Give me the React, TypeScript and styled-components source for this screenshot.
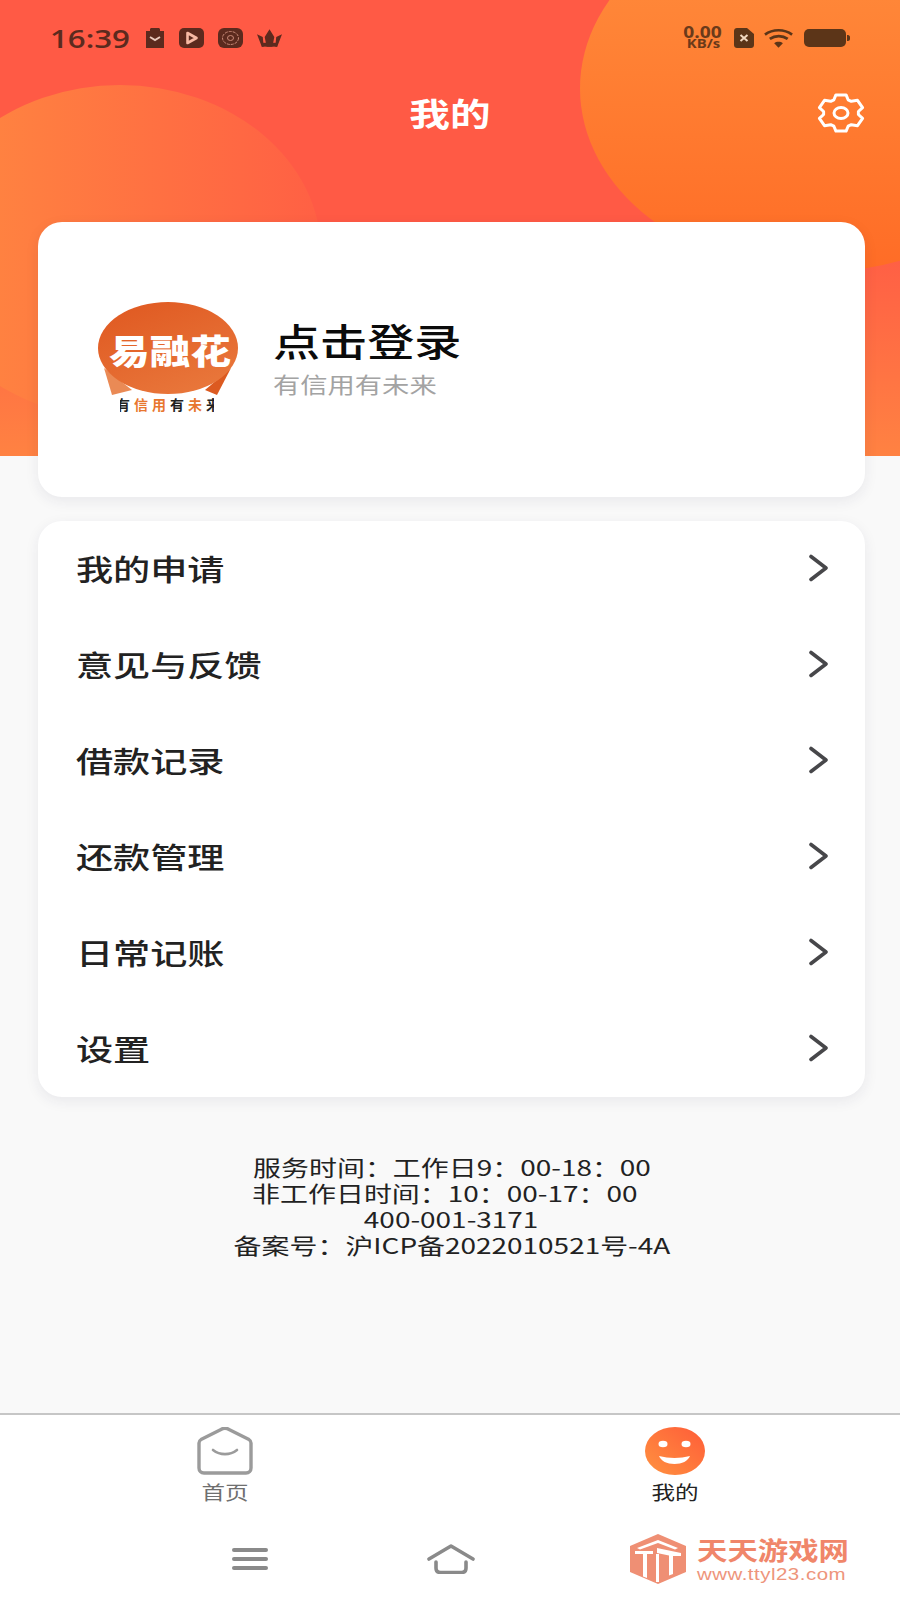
import React from 'react'
import styled, {createGlobalStyle, css} from 'styled-components'

const CJK = `"Noto Sans CJK SC", "Noto Sans", sans-serif`

const GlobalStyle = createGlobalStyle`
  html, body {
    margin: 0;
    padding: 0;
    background: #f9f9f9;
    font-family: ${CJK};
  }
`

// the whole screenshot is stretched sideways, so text gets the same treatment
const stretched = (amount: number, origin = 'center') => css`
  display: inline-block;
  transform: scaleX(${amount});
  transform-origin: ${origin} center;
  white-space: pre;
`

const Page = styled.div`
  width: 900px;
  height: 1600px;
  display: flex;
  flex-direction: column;
  background: #f9f9f9;
  overflow: hidden;
  position: relative;
`

const Hero = styled.header`
  height: 456px;
  flex: none;
  position: relative;
  overflow: hidden;
  background: linear-gradient(180deg, #ff5a45 0%, #ff5a45 50%, #ff8242 100%);
`

const LeftBlob = styled.div`
  position: absolute;
  left: -81px;
  top: 85px;
  width: 402px;
  height: 334px;
  border-radius: 50%;
  background: linear-gradient(90deg, #ff8a40 0%, #ff7042 60%, #ff6044 100%);
`

const RightBlob = styled.div`
  position: absolute;
  left: 580px;
  top: -95px;
  width: 476px;
  height: 367px;
  border-radius: 50%;
  background: linear-gradient(180deg, #ff8f3e 0%, #ff6c26 100%);
`

const StatusBar = styled.div`
  position: relative;
  height: 76px;
  box-sizing: border-box;
  padding: 0 50px 0 50px;
  display: flex;
  align-items: center;
  justify-content: space-between;
  color: #5c2a1e;
`

const StatusGroup = styled.div`
  display: flex;
  align-items: center;
  gap: 14px;
`

const StatusIcons = styled(StatusGroup)`
  gap: 10px;
`

const Clock = styled.span`
  font-family: "Open Sans", sans-serif;
  font-size: 26px;
  font-weight: 600;
  width: 80px;
  margin-right: 1px;
  line-height: 1;

  span {
    ${stretched(1.2, 'left')};
  }
`

const NetSpeed = styled.div`
  width: 42px;
  display: flex;
  flex-direction: column;
  align-items: center;
  color: #6b3a1a;
  font-family: "Open Sans", sans-serif;
  font-weight: 700;
  line-height: 12px;
`

const NetValue = styled.span<{$size: number}>`
  ${stretched(1.24)};
  font-size: ${p => p.$size}px;
`

const TitleRow = styled.div`
  position: relative;
  height: 72px;
  display: flex;
  align-items: center;
  justify-content: center;
`

const Title = styled.h1`
  ${stretched(1.27)};
  margin: 0;
  color: #fff;
  font-size: 32px;
  font-weight: 700;
  line-height: 72px;
`

const GearButton = styled.div`
  position: absolute;
  right: 35px;
  top: 17px;
  width: 48px;
  height: 40px;
  color: #fff;
`

const Content = styled.main`
  position: relative;
  margin-top: -234px;
  padding: 0 35px 0 38px;
  display: flex;
  flex-direction: column;
  gap: 24px;
`

const Card = styled.section`
  background: #fff;
  border-radius: 24px;
  box-shadow: 0 4px 14px rgba(40, 40, 80, 0.08);
`

const ProfileCard = styled(Card)`
  height: 275px;
  box-sizing: border-box;
  padding: 0 0 0 58px;
  display: flex;
  align-items: center;
  gap: 33px;
`

const ProfileText = styled.div`
  display: flex;
  flex-direction: column;
  align-items: flex-start;
  padding-bottom: 7px;
`

const LoginText = styled.div`
  ${stretched(1.24, 'left')};
  color: #0b0b0b;
  font-size: 38px;
  line-height: 50px;
  font-weight: 500;
`

const Slogan = styled.div`
  ${stretched(1.24, 'left')};
  color: #a3a3a3;
  font-size: 22px;
  line-height: 30px;
  margin-top: 3px;
`

const Menu = styled(Card)`
  display: flex;
  flex-direction: column;
`

const MenuRow = styled.div`
  height: 96px;
  box-sizing: border-box;
  padding: 0 37px 3px 38px;
  display: flex;
  align-items: center;
  justify-content: space-between;
  color: #47474a;
`

const MenuLabel = styled.span`
  ${stretched(1.28, 'left')};
  color: #222;
  font-size: 29px;
  font-weight: 500;
`

const ServiceInfo = styled.div`
  margin-top: 33px;
  display: flex;
  flex-direction: column;
  align-items: center;
  color: #222;
  font-size: 21.5px;
  line-height: 26px;
`

const InfoLine = styled.span`
  ${stretched(1.3)};
`

const BottomArea = styled.footer`
  margin-top: auto;
  height: 185px;
  background: #fff;
  border-top: 2px solid #c6c6c6;
  display: flex;
  flex-direction: column;
  position: relative;
`

const Tabs = styled.nav`
  display: grid;
  grid-template-columns: 1fr 1fr;
  padding: 12px 0 0;
`

const Tab = styled.div`
  display: flex;
  flex-direction: column;
  align-items: center;
  height: 84px;
`

const TabIcon = styled.div`
  height: 50px;
`

const TabLabel = styled.span<{$active?: boolean}>`
  ${stretched(1.24)};
  color: ${p => (p.$active ? '#222' : '#6f6f6f')};
  font-size: 19px;
  line-height: 26px;
  margin-top: 2px;
`

const SystemNav = styled.div`
  margin-top: 33px;
  padding-left: 232px;
  display: flex;
  align-items: center;
  gap: 159px;
  color: #8a8a8a;
`

const Watermark = styled.div`
  position: absolute;
  left: 629px;
  top: 119px;
  display: flex;
  align-items: center;
  gap: 10px;
`

const WatermarkText = styled.div`
  display: flex;
  flex-direction: column;
  align-items: flex-start;
  width: 160px;
`

const WatermarkName = styled.span`
  ${stretched(1.24, 'left')};
  color: #f0866a;
  font-size: 24.5px;
  font-weight: 700;
  line-height: 30px;
`

const WatermarkUrl = styled.span`
  ${stretched(1.24, 'left')};
  color: #ee957c;
  font-family: "Liberation Sans", sans-serif;
  font-size: 16.5px;
  letter-spacing: 0.4px;
  line-height: 18px;
`

const ClipboardIcon = () => (
  <svg width="20" height="20" viewBox="0 0 20 20">
    <path fill="currentColor" d="M1 3h4V1.500C5 .7 5.600 0 6.500 0h7c.8 0 1.500.7 1.500 1.500V3h4v17H1z"/>
    <path fill="none" stroke="#e9c9bd" strokeWidth="2" d="M5 9l5 3 5-3"/>
  </svg>
)

const PlayIcon = () => (
  <svg width="25" height="20" viewBox="0 0 25 20">
    <rect width="25" height="20" rx="5" fill="currentColor"/>
    <path fill="none" stroke="#f7b9a4" strokeWidth="2.600" strokeLinejoin="round" d="M8.500 5l9 5-9 5z"/>
  </svg>
)

const CameraIcon = () => (
  <svg width="25" height="20" viewBox="0 0 25 20">
    <rect width="25" height="20" rx="6" fill="currentColor"/>
    <ellipse cx="12.500" cy="10" rx="8" ry="6.500" fill="none" stroke="#c98a78" strokeWidth="1" strokeDasharray="3 1"/>
    <ellipse cx="12.500" cy="10" rx="3" ry="2.500" fill="none" stroke="#c98a78" strokeWidth="1"/>
  </svg>
)

const CrownIcon = () => (
  <svg width="25" height="18" viewBox="0 0 26 18">
    <path fill="currentColor" d="M0 5l6 3 1 10H5zM13 0l5 8-2 10H10L8 8zM26 5l-6 3-1 10h2z"/>
    <path fill="currentColor" d="M5 18h16V14H5z"/>
  </svg>
)

const SimIcon = () => (
  <svg width="20" height="20" viewBox="0 0 20 20">
    <path fill="#5c3518" d="M3 0h10l7 6v11c0 1.700-1.300 3-3 3H3c-1.700 0-3-1.300-3-3V3c0-1.700 1.300-3 3-3z"/>
    <path stroke="#f2d9c0" strokeWidth="2" d="M6.500 7l7 6M13.500 7l-7 6"/>
  </svg>
)

const WifiIcon = () => (
  <svg width="30" height="20" viewBox="0 0 31 20">
    <g fill="none" stroke="#5c3518" strokeWidth="2.800">
      <path d="M1 6.500C9 .5 21 .5 29 6.500"/>
      <path d="M6 11c5.500-4 13-4 18.500 0"/>
    </g>
    <path fill="#5c3518" d="M15 20l-4.500-4.500c2.500-2 6.500-2 9 0z"/>
  </svg>
)

const BatteryIcon = () => (
  <svg width="46" height="18" viewBox="0 0 46 18">
    <rect width="42" height="18" rx="5" fill="#5c3518"/>
    <path fill="#5c3518" d="M43 6h1c1 0 2 1 2 2v2c0 1-1 2-2 2h-1z"/>
  </svg>
)

// six teeth, top one pointing straight up, squashed like the rest of the picture
const gearPath = () => {
  const point = (deg: number, r: number) => {
    const a = (deg * Math.PI) / 180
    return `${(24 + 23 * r * Math.sin(a)).toFixed(1)} ${(20 - 19 * r * Math.cos(a)).toFixed(1)}`
  }
  const parts: string[] = []
  for (let i = 0; i < 6; i++) {
    const c = i * 60
    parts.push(point(c - 24, 0.76), point(c - 13, 0.98), point(c + 13, 0.98), point(c + 24, 0.76))
  }
  return `M${parts.join('L')}Z`
}

const GearIcon = () => (
  <svg width="48" height="40" viewBox="0 0 48 40" fill="none" stroke="currentColor" strokeWidth="3" strokeLinejoin="round">
    <path d={gearPath()}/>
    <ellipse cx="24" cy="20" rx="7" ry="5.500"/>
  </svg>
)

const ChevronIcon = () => (
  <svg width="20" height="28" viewBox="0 0 20 28" fill="none" stroke="currentColor" strokeWidth="3.600" strokeLinecap="round" strokeLinejoin="round">
    <path d="M3 2.500l15 11.500L3 25.500"/>
  </svg>
)

const Logo = () => (
  <svg width="144" height="116" viewBox="0 0 144 116">
    <defs>
      <linearGradient id="logoFill" x1="0.2" y1="0" x2="0.8" y2="1">
        <stop offset="0" stopColor="#e05a22"/>
        <stop offset="1" stopColor="#e9783c"/>
      </linearGradient>
      <clipPath id="sloganClip">
        <rect x="24" y="96" width="94" height="18"/>
      </clipPath>
    </defs>
    <path fill="#ea8a55" d="M8 66l28 22-20 5z"/>
    <path fill="#dc5a20" d="M135 66l-26 22 12 5z"/>
    <ellipse cx="72" cy="46" rx="70" ry="46" fill="url(#logoFill)"/>
    <text x="74" y="62" textAnchor="middle" fill="#fff" fontSize="34" fontWeight="900" fontFamily={CJK} textLength="122" lengthAdjust="spacingAndGlyphs">易融花</text>
    <text x="20" y="108" fontSize="14" fontWeight="700" fontFamily={CJK} letterSpacing="4" clipPath="url(#sloganClip)">
      <tspan fill="#222">有</tspan><tspan fill="#e8762e">信用</tspan><tspan fill="#222">有</tspan><tspan fill="#e8762e">未</tspan><tspan fill="#222">来</tspan>
    </text>
  </svg>
)

const HomeTabIcon = () => (
  <svg width="56" height="48" viewBox="0 0 56 48" fill="none" stroke="#9b9b9b" strokeWidth="3.400" strokeLinecap="round" strokeLinejoin="round">
    <path d="M2 16c0-1.500.8-2.700 2-3.400L24 2.400c2.600-1.300 5.400-1.300 8 0l20 10.200c1.200.7 2 1.900 2 3.400v25c0 3-2 5-5 5H7c-3 0-5-2-5-5z"/>
    <path d="M16 23c7 5.500 17 5.500 24 0" strokeWidth="2.600"/>
  </svg>
)

const MineTabIcon = () => (
  <svg width="62" height="48" viewBox="0 0 62 48">
    <defs>
      <linearGradient id="mineFill" x1="0" y1="1" x2="1" y2="0">
        <stop offset="0" stopColor="#ff9240"/>
        <stop offset="1" stopColor="#ff5c38"/>
      </linearGradient>
    </defs>
    <ellipse cx="31" cy="24" rx="30" ry="24" fill="url(#mineFill)"/>
    <ellipse cx="19" cy="17" rx="4.500" ry="3.200" fill="#fff"/>
    <ellipse cx="42" cy="17" rx="4.500" ry="3.200" fill="#fff"/>
    <path fill="#fff" d="M15 29c10 2.500 21 2.500 31 0-2 5-8 8-15.500 8S17 34 15 29z"/>
  </svg>
)

const MenuGlyph = () => (
  <svg width="36" height="22" viewBox="0 0 36 22" fill="currentColor">
    <rect y="0" width="36" height="4" rx="2"/>
    <rect y="9" width="36" height="4" rx="2"/>
    <rect y="18" width="36" height="4" rx="2"/>
  </svg>
)

const HomeGlyph = () => (
  <svg width="48" height="30" viewBox="0 0 48 30" fill="none" stroke="currentColor" strokeWidth="3.600" strokeLinecap="round" strokeLinejoin="round">
    <path d="M2 15L24 2l22 13"/>
    <path d="M9 18v6c0 3 1.500 4.500 4.500 4.500h21c3 0 4.500-1.500 4.500-4.500v-6"/>
  </svg>
)

const CubeLogo = () => (
  <svg width="58" height="50" viewBox="0 0 58 50">
    <path fill="#ef8f74" d="M29 0l28 12v26L29 50 1 38V12z"/>
    <g fill="#fff">
      <path d="M8 14l21-8 20 8-3 1.500L29 9 11 15.500z"/>
      <path d="M6 17h18v3h-6v24l-4-1.500V20H6z"/>
      <path d="M28 14l24 5v3h-8v18l-4 1.500V21.500l-12-2.500z"/>
      <path d="M27 20h3v28h-3z"/>
    </g>
  </svg>
)

const menuItems = ['我的申请', '意见与反馈', '借款记录', '还款管理', '日常记账', '设置']

const infoLines = [
  '服务时间：工作日9：00-18：00',
  '非工作日时间：10：00-17：00  ',
  '400-001-3171',
  '备案号：沪ICP备2022010521号-4A',
]

export default function App() {
  return (
    <Page>
      <GlobalStyle/>
      <Hero>
        <LeftBlob/>
        <RightBlob/>
        <StatusBar>
          <StatusGroup>
            <Clock><span>16:39</span></Clock>
            <ClipboardIcon/>
            <PlayIcon/>
            <CameraIcon/>
            <CrownIcon/>
          </StatusGroup>
          <StatusIcons>
            <NetSpeed>
              <NetValue $size={15.5}>0.00</NetValue>
              <NetValue $size={12}>KB/s</NetValue>
            </NetSpeed>
            <SimIcon/>
            <WifiIcon/>
            <BatteryIcon/>
          </StatusIcons>
        </StatusBar>
        <TitleRow>
          <Title>我的</Title>
          <GearButton><GearIcon/></GearButton>
        </TitleRow>
      </Hero>

      <Content>
        <ProfileCard>
          <Logo/>
          <ProfileText>
            <LoginText>点击登录</LoginText>
            <Slogan>有信用有未来</Slogan>
          </ProfileText>
        </ProfileCard>

        <Menu>
          {menuItems.map(item => (
            <MenuRow key={item}>
              <MenuLabel>{item}</MenuLabel>
              <ChevronIcon/>
            </MenuRow>
          ))}
        </Menu>

        <ServiceInfo>
          {infoLines.map(line => <InfoLine key={line}>{line}</InfoLine>)}
        </ServiceInfo>
      </Content>

      <BottomArea>
        <Tabs>
          <Tab>
            <TabIcon><HomeTabIcon/></TabIcon>
            <TabLabel>首页</TabLabel>
          </Tab>
          <Tab>
            <TabIcon><MineTabIcon/></TabIcon>
            <TabLabel $active>我的</TabLabel>
          </Tab>
        </Tabs>
        <SystemNav>
          <MenuGlyph/>
          <HomeGlyph/>
        </SystemNav>
        <Watermark>
          <CubeLogo/>
          <WatermarkText>
            <WatermarkName>天天游戏网</WatermarkName>
            <WatermarkUrl>www.ttyl23.com</WatermarkUrl>
          </WatermarkText>
        </Watermark>
      </BottomArea>
    </Page>
  )
}
